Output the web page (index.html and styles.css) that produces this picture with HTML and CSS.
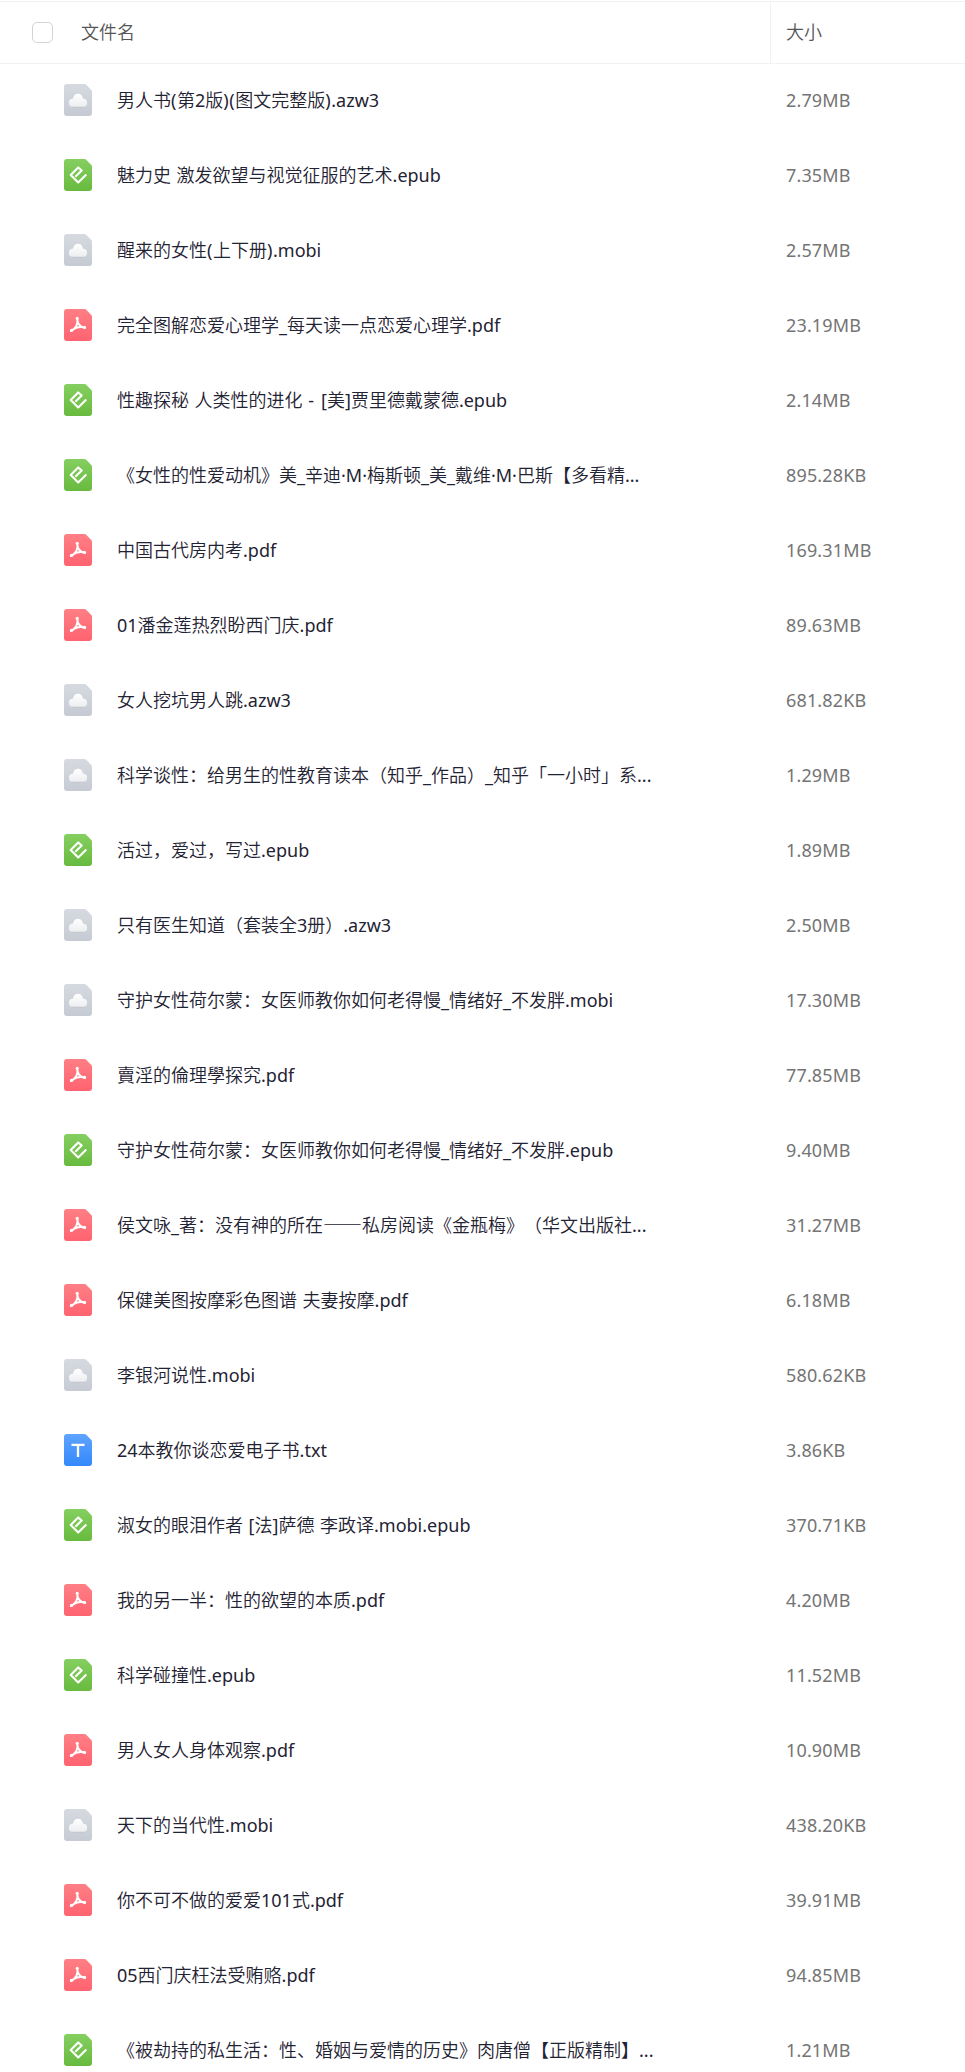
FILE: index.html
```
<!DOCTYPE html>
<html lang="zh-CN">
<head>
<meta charset="utf-8">
<title>文件列表</title>
<link rel="stylesheet" href="styles.css">
</head>
<body>
<svg class="defs" aria-hidden="true">
  <defs>
    <linearGradient id="g-gray" x1="0" y1="0" x2="0" y2="1"><stop offset="0" stop-color="#d6dae0"/><stop offset="1" stop-color="#c6cad3"/></linearGradient>
    <linearGradient id="g-green" x1="0" y1="0" x2="0" y2="1"><stop offset="0" stop-color="#85cf60"/><stop offset="1" stop-color="#68ba3f"/></linearGradient>
    <linearGradient id="g-red" x1="0" y1="0" x2="0" y2="1"><stop offset="0" stop-color="#ff7f85"/><stop offset="1" stop-color="#ff6370"/></linearGradient>
    <linearGradient id="g-blue" x1="0" y1="0" x2="0" y2="1"><stop offset="0" stop-color="#5ea4ff"/><stop offset="1" stop-color="#3488fb"/></linearGradient>
    <linearGradient id="g-cloud" x1="0" y1="0" x2="0" y2="1"><stop offset="0" stop-color="#fff"/><stop offset="1" stop-color="#eceef0"/></linearGradient>
    <path id="sheet" d="M3 0H20.5Q21.5 0 22.2.7L27.3 6Q28 6.800 28 7.800V29Q28 32 25 32H3Q0 32 0 29V3Q0 0 3 0Z"/>
  </defs>
  <symbol id="i-other" viewBox="0 0 28 32">
    <use href="#sheet" fill="url(#g-gray)"/>
    <path d="M9 23.600a4 4 0 0 1-.3-7.900A5.300 5.300 0 0 1 19.200 15.500a4.100 4.100 0 0 1-.2 8.100Z" fill="#b8bdc6" opacity=".6"/>
    <path d="M9 22.800a4 4 0 0 1-.2-8C9.500 11.700 11.300 9.800 14 9.800s4.500 1.900 5.200 5a4 4 0 0 1-.2 8Z" fill="url(#g-cloud)"/>
  </symbol>
  <symbol id="i-epub" viewBox="0 0 28 32">
    <use href="#sheet" fill="url(#g-green)"/>
    <path d="M11.300 17.800 17.700 11.600 14.200 8.400 6.700 16 14.200 23.400 22.300 15.400" fill="none" stroke="#fff" stroke-width="2.100" stroke-linejoin="round"/>
  </symbol>
  <symbol id="i-pdf" viewBox="0 0 28 32">
    <use href="#sheet" fill="url(#g-red)"/>
    <path d="M13.200 9.500C13.500 14.500 15.700 18 21 18.700M13.300 9.500C14.500 15 11.500 20 6.900 22M9.500 20.100C12.500 18.300 17 17.300 21 18.700" fill="none" stroke="#fff" stroke-width="1.900" stroke-linecap="round" stroke-linejoin="round"/>
    <circle cx="13.200" cy="9.300" r="1.500" fill="#fff"/><circle cx="7.500" cy="21.400" r="1.600" fill="#fff"/><circle cx="20.500" cy="18.400" r="1.600" fill="#fff"/>
  </symbol>
  <symbol id="i-txt" viewBox="0 0 28 32">
    <use href="#sheet" fill="url(#g-blue)"/>
    <path d="M7.500 10.800H20.500M14 10.800V23" fill="none" stroke="#fff" stroke-width="2.300"/>
  </symbol>
</svg>
<main class="list">
  <header class="head">
    <div class="head-name"><span class="check"></span><span>文件名</span></div>
    <div class="head-size">大小</div>
  </header>
  <div class="row"><svg class="icon"><use href="#i-other"/></svg><span class="name">男人书<span class="paren">(</span>第2版<span class="paren">)(</span>图文完整版<span class="paren">)</span>.azw3</span><span class="size">2.79MB</span></div>
  <div class="row"><svg class="icon"><use href="#i-epub"/></svg><span class="name">魅力史 激发欲望与视觉征服的艺术.epub</span><span class="size">7.35MB</span></div>
  <div class="row"><svg class="icon"><use href="#i-other"/></svg><span class="name">醒来的女性<span class="paren">(</span>上下册<span class="paren">)</span>.mobi</span><span class="size">2.57MB</span></div>
  <div class="row"><svg class="icon"><use href="#i-pdf"/></svg><span class="name">完全图解恋爱心理学_每天读一点恋爱心理学.pdf</span><span class="size">23.19MB</span></div>
  <div class="row"><svg class="icon"><use href="#i-epub"/></svg><span class="name">性趣探秘 人类性的进化 <span class="hyphen">-</span> [美]贾里德戴蒙德.epub</span><span class="size">2.14MB</span></div>
  <div class="row"><svg class="icon"><use href="#i-epub"/></svg><span class="name">《女性的性爱动机》美_辛迪·M·梅斯顿_美_戴维·M·巴斯【多看精...</span><span class="size">895.28KB</span></div>
  <div class="row"><svg class="icon"><use href="#i-pdf"/></svg><span class="name">中国古代房内考.pdf</span><span class="size">169.31MB</span></div>
  <div class="row"><svg class="icon"><use href="#i-pdf"/></svg><span class="name">01潘金莲热烈盼西门庆.pdf</span><span class="size">89.63MB</span></div>
  <div class="row"><svg class="icon"><use href="#i-other"/></svg><span class="name">女人挖坑男人跳.azw3</span><span class="size">681.82KB</span></div>
  <div class="row"><svg class="icon"><use href="#i-other"/></svg><span class="name">科学谈性：给男生的性教育读本（知乎_作品）_知乎「一小时」系...</span><span class="size">1.29MB</span></div>
  <div class="row"><svg class="icon"><use href="#i-epub"/></svg><span class="name">活过，爱过，写过.epub</span><span class="size">1.89MB</span></div>
  <div class="row"><svg class="icon"><use href="#i-other"/></svg><span class="name">只有医生知道（套装全3册）.azw3</span><span class="size">2.50MB</span></div>
  <div class="row"><svg class="icon"><use href="#i-other"/></svg><span class="name">守护女性荷尔蒙：女医师教你如何老得慢_情绪好_不发胖.mobi</span><span class="size">17.30MB</span></div>
  <div class="row"><svg class="icon"><use href="#i-pdf"/></svg><span class="name">賣淫的倫理學探究.pdf</span><span class="size">77.85MB</span></div>
  <div class="row"><svg class="icon"><use href="#i-epub"/></svg><span class="name">守护女性荷尔蒙：女医师教你如何老得慢_情绪好_不发胖.epub</span><span class="size">9.40MB</span></div>
  <div class="row"><svg class="icon"><use href="#i-pdf"/></svg><span class="name">侯文咏_著：没有神的所在<span class="dash">——</span>私房阅读《金瓶梅》（华文出版社...</span><span class="size">31.27MB</span></div>
  <div class="row"><svg class="icon"><use href="#i-pdf"/></svg><span class="name">保健美图按摩彩色图谱 夫妻按摩.pdf</span><span class="size">6.18MB</span></div>
  <div class="row"><svg class="icon"><use href="#i-other"/></svg><span class="name">李银河说性.mobi</span><span class="size">580.62KB</span></div>
  <div class="row"><svg class="icon"><use href="#i-txt"/></svg><span class="name">24本教你谈恋爱电子书.txt</span><span class="size">3.86KB</span></div>
  <div class="row"><svg class="icon"><use href="#i-epub"/></svg><span class="name">淑女的眼泪作者 [法]萨德 李政译.mobi.epub</span><span class="size">370.71KB</span></div>
  <div class="row"><svg class="icon"><use href="#i-pdf"/></svg><span class="name">我的另一半：性的欲望的本质.pdf</span><span class="size">4.20MB</span></div>
  <div class="row"><svg class="icon"><use href="#i-epub"/></svg><span class="name">科学碰撞性.epub</span><span class="size">11.52MB</span></div>
  <div class="row"><svg class="icon"><use href="#i-pdf"/></svg><span class="name">男人女人身体观察.pdf</span><span class="size">10.90MB</span></div>
  <div class="row"><svg class="icon"><use href="#i-other"/></svg><span class="name">天下的当代性.mobi</span><span class="size">438.20KB</span></div>
  <div class="row"><svg class="icon"><use href="#i-pdf"/></svg><span class="name">你不可不做的爱爱101式.pdf</span><span class="size">39.91MB</span></div>
  <div class="row"><svg class="icon"><use href="#i-pdf"/></svg><span class="name">05西门庆枉法受贿赂.pdf</span><span class="size">94.85MB</span></div>
  <div class="row"><svg class="icon"><use href="#i-epub"/></svg><span class="name">《被劫持的私生活：性、婚姻与爱情的历史》肉唐僧【正版精制】...</span><span class="size">1.21MB</span></div>
</main>
</body>
</html>
```
FILE: styles.css
```
* { box-sizing: border-box; }
html { overflow: hidden; }
body {
  margin: 0;
  height: 2072px;
  overflow: hidden;
  background: #fff;
  color: #1f2333;
  font: 400 18px/24px "Noto Sans", "Noto Sans CJK SC DemiLight", "Noto Sans CJK SC Light", "Noto Sans CJK SC", sans-serif;
  font-kerning: none;
  text-spacing-trim: space-all;
}
.defs { display: block; width: 0; height: 0; }
.list { padding-top: 1px; }
.head {
  display: grid;
  grid-template-columns: 770px 1fr;
  height: 63px;
  border-top: 1px solid #f1f2f4;
  border-bottom: 1px solid #f1f2f4;
  color: #555;
  font-weight: 300;
}
.head-name { display: flex; align-items: center; gap: 28px; padding-left: 32px; }
.head-name span:last-child { padding-bottom: 2px; }
.check { width: 21px; height: 21px; border: 1px solid #d4d4d4; border-radius: 5px; }
.head-size { display: flex; align-items: center; padding: 0 0 2px 15px; border-left: 1px solid #f1f2f4; }
.row {
  display: grid;
  grid-template-columns: 28px 642px 1fr;
  column-gap: 25px;
  align-items: center;
  height: 75px;
  padding: 0 0 3px 64px;
}
.icon { display: block; width: 28px; height: 32px; }
.name { white-space: nowrap; word-spacing: .9px; }
.paren { letter-spacing: .6px; }
.hyphen { letter-spacing: 1.500px; }
.dash { font: 300 19.500px/20px "Noto Sans CJK SC Light", "Noto Sans CJK SC", sans-serif; }
.size { color: #747474; margin-left: 2px; letter-spacing: .15px; }
```
